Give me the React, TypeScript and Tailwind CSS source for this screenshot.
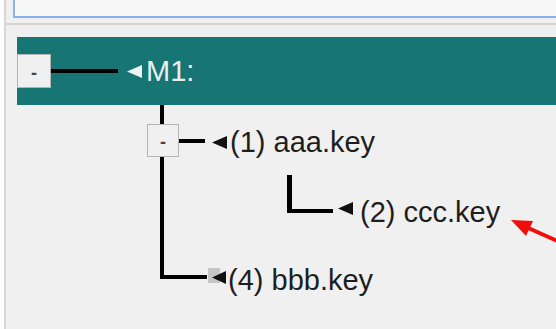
import React from "react";

const font = "font-['Liberation_Sans',Arial,sans-serif]";

function Toggle({ w, h }: { w: string; h: string }) {
    return (
        <div className={`${w} ${h} flex shrink-0 items-center justify-center border border-[#b4b4b4] bg-[#f0f0f0] text-[18px] font-bold leading-none text-[#444]`}>
            <span className="mt-[3px]">-</span>
        </div>
    );
}

function Arrow({ fill, className = "" }: { fill: string; className?: string }) {
    return (
        <svg width="15" height="13" viewBox="0 0 15 13" className={`shrink-0 ${className}`}>
            <polygon points="0,6.5 15,0 15,13" fill={fill} />
        </svg>
    );
}

export default function App() {
    return (
        <div className={`relative h-[329px] w-[556px] overflow-hidden bg-white ${font}`}>
            <div className="ml-[4px] h-full border-l-2 border-[#d6d6d6] bg-[#f0f0f0]">
                {/* search box edge */}
                <div className="ml-[7px] h-[18px] border-b-2 border-l-2 border-[#88b0f4] bg-[#f7f7f7]" />
                <div className="mt-[5px] h-[2px] bg-[#d3d3d3]" />

                {/* root row, selected */}
                <div className="ml-[11px] mt-[12px] flex h-[68px] items-center bg-[#177574]">
                    <Toggle w="w-[34px]" h="h-[34px]" />
                    <div className="h-[4px] w-[67px] bg-black" />
                    <Arrow fill="#eef3f3" className="ml-[9px]" />
                    <span className="ml-[4px] text-[29px] leading-[32px] text-[#e8efee]">M1:</span>
                </div>

                {/* children */}
                <div className="ml-[141px] text-[29px] leading-[32px] text-[#1e1e1e]">
                    <div className="ml-[13px] h-[19px] w-[4px] bg-black" />

                    <div className="flex h-[33px] items-center">
                        <Toggle w="w-[32px]" h="h-[33px]" />
                        <div className="h-[4px] w-[26px] bg-black" />
                        <Arrow fill="#111" className="ml-[7px] mt-[4px]" />
                        <span className="ml-[3px] mt-[2px]">(1) aaa.key</span>
                    </div>

                    <div className="ml-[13px] flex flex-col">
                        <div className="h-[105px] border-l-4 border-black pl-[123px] pt-[18px]">
                            <div className="flex items-end">
                                <div className="mb-[15px] h-[38px] w-[46px] border-b-4 border-l-[5px] border-black" />
                                <Arrow fill="#111" className="mb-[13px] ml-[5px]" />
                                <span className="ml-[7px]">(2) ccc.key</span>
                            </div>
                        </div>

                        <div className="flex items-end">
                            <div className="mb-[17px] h-[17px] w-[47px] border-b-4 border-l-4 border-black" />
                            <svg width="18" height="17" viewBox="0 0 18 17" className="mb-[11px] ml-[1px] shrink-0">
                                <rect x="0" y="0" width="12" height="15" fill="#c6c6c6" />
                                <polygon points="4,9.5 18,3 18,16" fill="#111" />
                            </svg>
                            <span className="ml-[2px]">(4) bbb.key</span>
                        </div>
                    </div>
                </div>
            </div>

            {/* red callout arrow */}
            <svg width="556" height="329" className="pointer-events-none absolute inset-0">
                <line x1="526" y1="227" x2="562" y2="243" stroke="#f20d0d" strokeWidth="4" />
                <polygon points="511,220 526,236 533,221" fill="#f20d0d" />
            </svg>
        </div>
    );
}
